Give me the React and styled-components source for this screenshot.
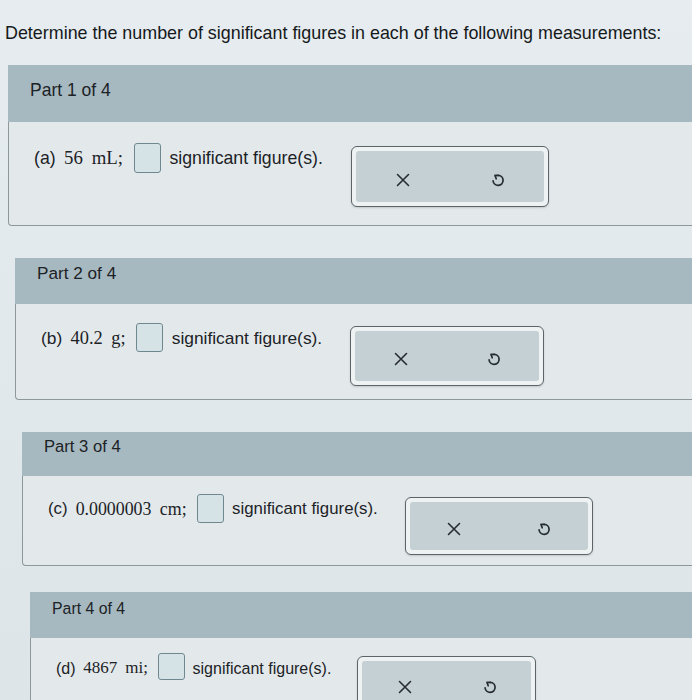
import styled, { createGlobalStyle } from "styled-components";

const GlobalStyle = createGlobalStyle`
  html, body {
    margin: 0;
    padding: 0;
    background: #dfe6e9;
  }
  body {
    font-family: "Liberation Sans", Arial, sans-serif;
    color: #1d2326;
  }
`;

// the screen was photographed at a slant: each part sits a bit further right and a bit smaller
const parts = [
  { letter: "a", value: "56 mL", indent: 8, gap: 22, scale: 1, headH: 57, headPad: 17, bodyH: 104, bodyPad: 21 },
  { letter: "b", value: "40.2 g", indent: 15, gap: 32, scale: 0.98, headH: 46, headPad: 7, bodyH: 96, bodyPad: 19 },
  { letter: "c", value: "0.0000003 cm", indent: 22, gap: 32, scale: 0.95, headH: 44, headPad: 7, bodyH: 90, bodyPad: 18 },
  { letter: "d", value: "4867 mi", indent: 30, gap: 26, scale: 0.905, headH: 46, headPad: 9, bodyH: 100, bodyPad: 15 },
];

function CloseIcon() {
  return (
    <svg width="16" height="16" viewBox="0 0 16 16">
      <path d="M2.5 2.5 L13.5 13.5 M13.5 2.5 L2.5 13.5" stroke="#262c2f" strokeWidth="1.6" strokeLinecap="round" fill="none" />
    </svg>
  );
}

function UndoIcon() {
  return (
    <svg width="15" height="17" viewBox="0 0 15 17">
      <path d="M6.2 7.8 L5 4.4 H8.2" stroke="#262c2f" strokeWidth="1.7" strokeLinecap="round" strokeLinejoin="round" fill="none" />
      <path d="M8.2 4.4 A5 5 0 1 1 3.1 9.9" stroke="#262c2f" strokeWidth="1.7" strokeLinecap="round" fill="none" />
    </svg>
  );
}

function Part({ index, part }) {
  return (
    <Card $indent={part.indent} $gap={part.gap} $scale={part.scale}>
      <CardHeader $h={part.headH} $pad={part.headPad}>
        Part {index + 1} of {parts.length}
      </CardHeader>
      <CardBody $h={part.bodyH} $pad={part.bodyPad}>
        <Row>
          <Label>({part.letter})</Label>
          <Value>{part.value};</Value>
          <AnswerBox />
          <Label>significant figure(s).</Label>
          <ActionFrame>
            <ActionInner>
              <IconBtn aria-label="clear">
                <CloseIcon />
              </IconBtn>
              <IconBtn aria-label="undo">
                <UndoIcon />
              </IconBtn>
            </ActionInner>
          </ActionFrame>
        </Row>
      </CardBody>
    </Card>
  );
}

export default function App() {
  return (
    <>
      <GlobalStyle />
      <Page>
        <Title>Determine the number of significant figures in each of the following measurements:</Title>
        {parts.map((p, i) => (
          <Part key={p.letter} index={i} part={p} />
        ))}
      </Page>
    </>
  );
}

const Page = styled.div`
  width: 692px;
  height: 700px;
  overflow: hidden;
  padding-top: 23px;
  box-sizing: border-box;
  background: linear-gradient(180deg, #e6ecef 0%, #dde5e8 100%);
`;

const Title = styled.h1`
  margin: 0 0 0 5px;
  font-size: 17.9px;
  line-height: 20px;
  font-weight: normal;
  white-space: nowrap;
  color: #15191b;
`;

const Card = styled.section`
  margin-top: ${(p) => p.$gap}px;
  margin-left: ${(p) => p.$indent}px;
  margin-right: -30px;
  font-size: ${(p) => (17.7 * p.$scale).toFixed(2)}px;
`;

const CardHeader = styled.div`
  height: ${(p) => p.$h}px;
  box-sizing: border-box;
  padding: ${(p) => p.$pad}px 0 0 22px;
  background: #a7b9c0;
  font-size: 0.99em;
  line-height: 16px;
  color: #1c2226;
`;

const CardBody = styled.div`
  height: ${(p) => p.$h}px;
  box-sizing: border-box;
  padding: ${(p) => p.$pad}px 0 0 25px;
  background: #e3e9eb;
  border-left: 1px solid #8e989b;
  border-bottom: 1px solid #8e989b;
  border-bottom-left-radius: 4px;
`;

const Row = styled.div`
  display: flex;
  align-items: flex-start;
  white-space: nowrap;
`;

const Label = styled.span`
  font-size: 1em;
  line-height: 30px;
  color: #1c2226;
`;

const Value = styled.span`
  font-family: "Liberation Serif", "Times New Roman", serif;
  font-size: 1.062em;
  word-spacing: 0.22em;
  line-height: 30px;
  margin-left: 0.45em;
  color: #1c2226;
`;

const AnswerBox = styled.span`
  width: 27px;
  height: 1.7em;
  box-sizing: border-box;
  margin: 0 0.5em 0 0.6em;
  border: 1.5px solid #6f8890;
  border-radius: 3px;
  background: #d6e3e6;
`;

const ActionFrame = styled.div`
  margin: 3px 0 0 1.6em;
  width: 11.2em;
  height: 3.45em;
  box-sizing: border-box;
  padding: 4px;
  border: 1.5px solid #5c6468;
  border-radius: 6px;
  background: #eef2f3;
  box-shadow: 0 1px 2px rgba(0, 0, 0, 0.15);
`;

const ActionInner = styled.div`
  height: 100%;
  display: flex;
  justify-content: space-around;
  align-items: center;
  border-radius: 3px;
  background: #c4d0d4;
`;

const IconBtn = styled.button`
  display: flex;
  align-items: center;
  justify-content: center;
  margin-top: 6px;
  padding: 0;
  border: none;
  background: none;
`;
